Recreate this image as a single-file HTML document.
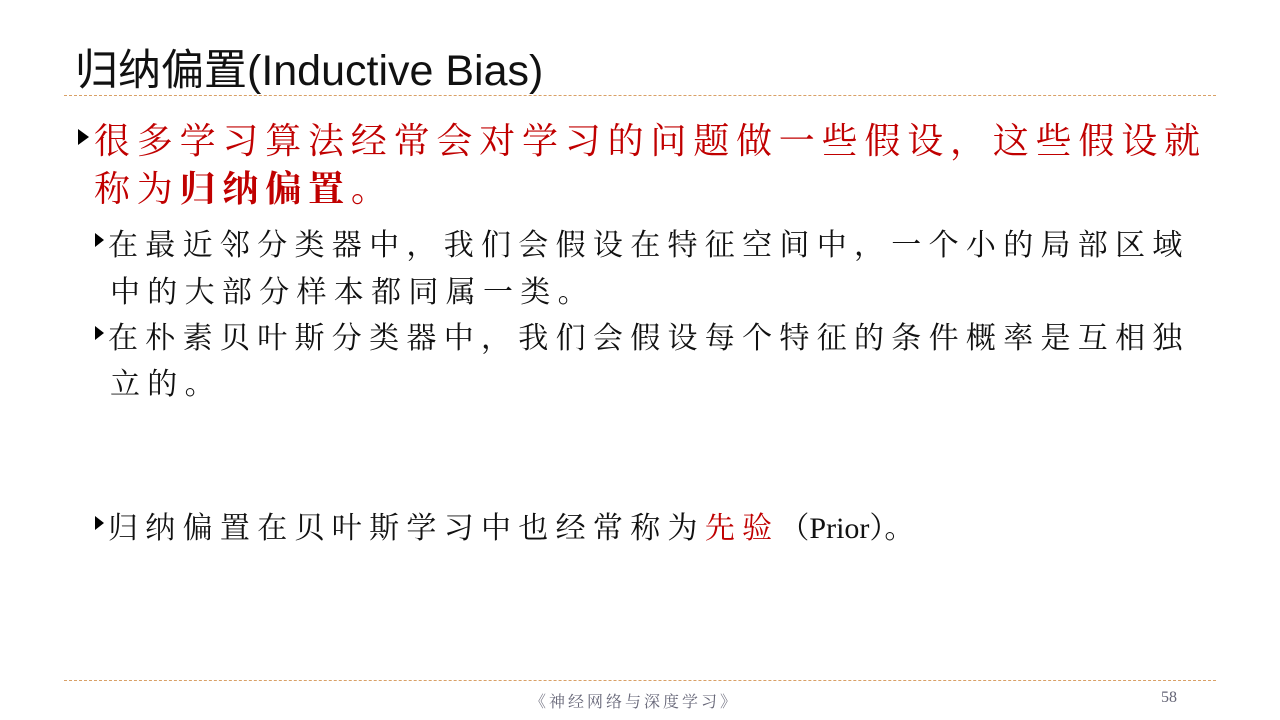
<!DOCTYPE html>
<html><head><meta charset="utf-8"><style>
body{margin:0;width:1280px;height:720px;background:#fff;position:relative;overflow:hidden;font-family:"Liberation Serif","Noto Serif CJK SC",serif}
.t{position:absolute;left:75px;top:36px;font-family:"Liberation Sans","Noto Sans CJK SC",sans-serif;font-size:43px;color:#111;letter-spacing:0px}
.hr{position:absolute;left:64px;width:1152px;border-top:1px dashed #d9a066}
.l{position:absolute;white-space:nowrap}
.r{color:#c00000;font-size:36px;letter-spacing:6.8px;left:94px}
.b{color:#111;font-size:30px;letter-spacing:7.3px;left:108px}
.tri{position:absolute;width:0;height:0;border-top:8px solid transparent;border-bottom:8px solid transparent;border-left:11px solid #000}
.tri2{position:absolute;width:0;height:0;border-top:7px solid transparent;border-bottom:7px solid transparent;border-left:9px solid #000}
.f{position:absolute;top:689px;font-size:16px;color:#667}
</style></head><body>
<div class="t">归纳偏置(Inductive Bias)</div>
<div class="hr" style="top:95px"></div>
<div class="tri" style="left:78px;top:129px"></div>
<div class="l r" style="top:113px">很多学习算法经常会对学习的问题做一些假设，这些假设就</div>
<div class="l r" style="top:161px">称为<b>归纳偏置</b>。</div>
<div class="tri2" style="left:95px;top:233px"></div>
<div class="l b" style="top:220px">在最近邻分类器中，我们会假设在特征空间中，一个小的局部区域</div>
<div class="l b" style="top:267px;left:110px">中的大部分样本都同属一类。</div>
<div class="tri2" style="left:95px;top:326px"></div>
<div class="l b" style="top:313px">在朴素贝叶斯分类器中，我们会假设每个特征的条件概率是互相独</div>
<div class="l b" style="top:359px;left:110px">立的。</div>
<div class="tri2" style="left:95px;top:516px"></div>
<div class="l b" style="top:503px">归纳偏置在贝叶斯学习中也经常称为<span style="color:#c00000">先验</span><span style="letter-spacing:0">（Prior）</span>。</div>
<div class="hr" style="top:680px"></div>
<div class="f" style="left:530px;letter-spacing:3px">《神经网络与深度学习》</div>
<div class="f" style="left:1161px">58</div>
</body></html>
